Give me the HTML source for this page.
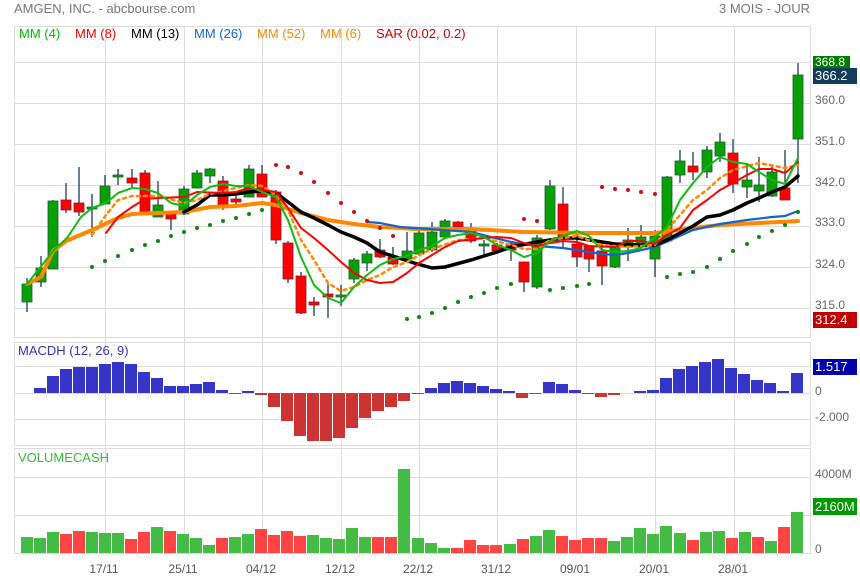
<!DOCTYPE html>
<html><head><meta charset="utf-8"><style>
html,body{margin:0;padding:0;background:#fff;}
svg{display:block;font-family:"Liberation Sans",sans-serif;}
</style></head><body>
<svg width="860" height="580" viewBox="0 0 860 580" xmlns="http://www.w3.org/2000/svg">
<rect width="860" height="580" fill="#fff"/>
<text x="14" y="13" font-size="13" fill="#777">AMGEN, INC. - abcbourse.com</text>
<text x="810" y="13" font-size="13" fill="#777" text-anchor="end">3 MOIS - JOUR</text>
<g stroke="#dcdcdc" stroke-width="1" fill="none">
<rect x="14.5" y="26.5" width="796" height="311"/>
<rect x="14.5" y="342.5" width="796" height="103"/>
<rect x="14.5" y="448.5" width="796" height="105"/>
<path d="M14 62.5H810M14 103.5H810M14 144.5H810M14 185.5H810M14 226.5H810M14 267.5H810M14 308.5H810"/>
<path d="M14 366.5H810M14 393.5H810M14 419.5H810M14 477.5H810M14 515.5H810"/>
<path d="M105.5 26V553M184.5 26V553M262.5 26V553M341.5 26V553M419.5 26V553M497.5 26V553M576.5 26V553M655.5 26V553M734.5 26V553"/>
</g>
<g font-size="13">
<text x="19" y="38" fill="#00bb00">MM (4)</text>
<text x="75" y="38" fill="#ff0000">MM (8)</text>
<text x="131" y="38" fill="#000">MM (13)</text>
<text x="194" y="38" fill="#1166cc">MM (26)</text>
<text x="257" y="38" fill="#ff8800">MM (52)</text>
<text x="320" y="38" fill="#ff8800">MM (6)</text>
<text x="376" y="38" fill="#cc0000">SAR (0.02, 0.2)</text>
</g>
<g font-size="12" fill="#666">
<text x="815" y="104">360.0</text><text x="815" y="145">351.0</text><text x="815" y="186">342.0</text>
<text x="815" y="226">333.0</text><text x="815" y="268">324.0</text><text x="815" y="309">315.0</text>
<text x="815" y="395">0</text><text x="815" y="421">-2.000</text>
<text x="815" y="478">4000M</text><text x="815" y="553">0</text>
</g>
<rect x="813" y="56" width="37" height="12" fill="#007a00"/><text x="815" y="66" font-size="12" fill="#fff">368.8</text>
<rect x="813" y="68" width="44" height="16" fill="#123c5a"/><text x="815" y="80" font-size="13" fill="#fff">366.2</text>
<rect x="813" y="312" width="44" height="16" fill="#c00000"/><text x="815" y="324" font-size="13" fill="#fff">312.4</text>
<rect x="813" y="359" width="44" height="16" fill="#0000aa"/><text x="815" y="371" font-size="13" fill="#fff">1.517</text>
<rect x="813" y="498" width="44" height="17" fill="#009900"/><text x="815" y="511" font-size="13" fill="#fff">2160M</text>
<g stroke="#1a3a5a" stroke-width="1.3">
<path d="M27 278V312M41 256V287M53 200V269M66 183V213M79 167V216M92 194V237M105 175V204M118 169V185M132 169V188M145 170V213M158 181V217M171 212V230M184 186V215M197 170V188M210 168V183M223 176V210M236 196V204M249 165V197M262 165V197M276 190V244M288 241V283M301 272V314M314 297V316M328 284V318M341 285V306M354 258V283M367 251V271M380 239V258M393 247V265M407 232V260M419 229V256M432 222V252M445 219V238M458 221V232M471 223V243M484 240V257M497 243V252M511 242V261M524 262V292M537 235V289M550 180V230M563 187V247M577 232V267M589 245V272M602 247V285M615 245V268M628 228V261M641 225V248M655 230V277M667 176V242M680 150V183M693 152V180M707 146V178M720 133V162M733 139V193M747 163V198M759 157V202M772 166V197M785 150V200M798 63V183"/>
</g>
<g stroke="#1e5a2e" stroke-width="0.8" fill="#07a007">
<rect x="22" y="284" width="10" height="18"/><rect x="36" y="268" width="10" height="14"/><rect x="48" y="201" width="10" height="68"/>
<rect x="87" y="207" width="10" height="2"/><rect x="100" y="186" width="10" height="18"/><rect x="113" y="175" width="10" height="2"/>
<rect x="153" y="205" width="10" height="12"/><rect x="179" y="189" width="10" height="25"/><rect x="192" y="173" width="10" height="15"/>
<rect x="205" y="169" width="10" height="7"/><rect x="244" y="169" width="10" height="28"/><rect x="336" y="295" width="10" height="2"/>
<rect x="349" y="260" width="10" height="19"/><rect x="362" y="254" width="10" height="9"/><rect x="402" y="251" width="10" height="8"/>
<rect x="414" y="233" width="10" height="21"/><rect x="427" y="232" width="10" height="18"/><rect x="440" y="221" width="10" height="16"/>
<rect x="479" y="244" width="10" height="2"/><rect x="532" y="238" width="10" height="49"/><rect x="545" y="186" width="10" height="43"/>
<rect x="610" y="246" width="10" height="21"/><rect x="623" y="240" width="10" height="7"/><rect x="636" y="237" width="10" height="10"/>
<rect x="650" y="236" width="10" height="23"/><rect x="662" y="177" width="10" height="64"/><rect x="675" y="161" width="10" height="14"/>
<rect x="702" y="150" width="10" height="22"/><rect x="715" y="142" width="10" height="14"/><rect x="742" y="180" width="10" height="7"/>
<rect x="754" y="185" width="10" height="6"/><rect x="767" y="172" width="10" height="24"/><rect x="793" y="75" width="10" height="64"/>
</g>
<g stroke="#8a1a2a" stroke-width="0.8" fill="#ff0000">
<rect x="61" y="200" width="10" height="10"/><rect x="74" y="203" width="10" height="9"/><rect x="127" y="178" width="10" height="5"/>
<rect x="140" y="173" width="10" height="39"/><rect x="166" y="212" width="10" height="7"/><rect x="218" y="181" width="10" height="24"/>
<rect x="231" y="199" width="10" height="3"/><rect x="257" y="174" width="10" height="23"/><rect x="271" y="192" width="10" height="48"/>
<rect x="283" y="243" width="10" height="36"/><rect x="296" y="276" width="10" height="37"/><rect x="309" y="302" width="10" height="3"/>
<rect x="323" y="294" width="10" height="3"/><rect x="375" y="250" width="10" height="7"/><rect x="388" y="257" width="10" height="7"/>
<rect x="453" y="222" width="10" height="5"/><rect x="466" y="230" width="10" height="11"/><rect x="492" y="245" width="10" height="6"/>
<rect x="506" y="244" width="10" height="6"/><rect x="519" y="262" width="10" height="20"/><rect x="558" y="204" width="10" height="33"/>
<rect x="572" y="244" width="10" height="13"/><rect x="584" y="246" width="10" height="13"/><rect x="597" y="251" width="10" height="15"/>
<rect x="688" y="166" width="10" height="6"/><rect x="728" y="153" width="10" height="31"/><rect x="780" y="188" width="10" height="12"/>
</g>
<g fill="none" stroke-linejoin="round" stroke-linecap="round">
<polyline stroke="#ff8800" stroke-width="4" points="27,284 41,277 53,251 66,241 92,230 118,218 132,214 158,213 184,212 210,207 236,206 262,203 276,205 301,213 328,220 354,224 380,227 400,228 414,229 471,229 524,232 589,233 655,233 693,228 720,225 759,223 798,221"/>
<polyline stroke="#1166cc" stroke-width="2.2" points="367,222 380,223 400,227 471,232 511,242 537,246 563,248 602,254 615,255 628,253 655,247 693,230 720,224 747,220 772,217 785,216 798,211"/>
<polyline stroke="#000" stroke-width="3.5" points="184,212 197,205 210,195 223,195 236,194 249,192 262,191 276,193 288,202 301,212 314,218 328,225 341,232 354,237 367,243 380,252 393,256 414,263 432,268 445,267 471,260 497,252 511,247 537,242 563,238 577,238 602,242 615,244 641,245 655,245 667,240 693,226 707,217 720,215 733,210 747,203 759,198 772,192 785,187 798,176"/>
<polyline stroke="#ff8800" stroke-width="2.5" stroke-dasharray="3,4" points="92,235 106,215 118,200 132,196 158,196 184,203 197,200 210,194 236,188 249,185 262,186 276,195 288,210 301,240 314,260 328,283 341,291 354,287 367,280 380,275 393,267 407,262 419,255 432,249 458,240 484,238 511,245 524,249 537,249 550,240 577,236 602,245 628,247 655,245 667,230 680,215 693,200 707,190 720,178 733,170 759,163 785,168 798,165"/>
<polyline stroke="#ff0000" stroke-width="2" points="106,233 118,217 132,207 145,199 158,198 184,197 197,192 223,193 236,192 249,188 262,190 276,192 288,208 301,228 314,238 328,250 341,262 354,273 367,280 380,283 393,282 407,273 419,263 432,255 445,247 458,241 484,238 497,237 511,238 524,243 537,246 550,243 563,241 577,242 589,246 615,247 628,241 641,241 655,244 667,235 680,228 693,210 707,200 720,190 733,183 747,175 759,169 772,169 785,173 798,162"/>
<polyline stroke="#11bb11" stroke-width="2" points="27,284 54,250 67,238 81,217 92,208 106,203 118,193 132,188 145,189 158,193 171,203 184,206 197,195 210,187 223,184 236,186 249,186 262,192 276,197 288,220 301,257 314,285 328,298 341,303 354,287 367,275 380,265 393,259 407,256 419,250 432,246 445,238 458,235 471,233 484,237 497,245 511,250 524,257 537,253 550,241 563,236 577,231 589,236 602,250 615,252 628,251 641,248 655,237 667,227 680,200 693,183 707,167 720,157 733,162 747,164 759,172 772,180 785,184 798,158"/>
</g>
<g fill="#0a8a0a">
<circle cx="92" cy="267" r="2"/><circle cx="105" cy="261" r="2"/><circle cx="118" cy="256" r="2"/><circle cx="132" cy="250" r="2"/><circle cx="145" cy="245" r="2"/><circle cx="158" cy="241" r="2"/><circle cx="171" cy="236" r="2"/><circle cx="184" cy="232" r="2"/><circle cx="197" cy="228" r="2"/><circle cx="210" cy="225" r="2"/><circle cx="223" cy="221" r="2"/><circle cx="236" cy="218" r="2"/><circle cx="249" cy="214" r="2"/><circle cx="262" cy="210" r="2"/>
<circle cx="407" cy="319" r="2"/><circle cx="419" cy="317" r="2"/><circle cx="432" cy="313" r="2"/><circle cx="445" cy="308" r="2"/><circle cx="458" cy="302" r="2"/><circle cx="471" cy="297" r="2"/><circle cx="484" cy="293" r="2"/><circle cx="497" cy="288" r="2"/><circle cx="511" cy="284" r="2"/>
<circle cx="550" cy="290" r="2"/><circle cx="563" cy="288" r="2"/><circle cx="577" cy="286" r="2"/><circle cx="589" cy="284" r="2"/>
<circle cx="667" cy="277" r="2"/><circle cx="680" cy="274" r="2"/><circle cx="693" cy="272" r="2"/><circle cx="707" cy="267" r="2"/><circle cx="720" cy="259" r="2"/><circle cx="733" cy="251" r="2"/><circle cx="747" cy="244" r="2"/><circle cx="759" cy="237" r="2"/><circle cx="772" cy="231" r="2"/><circle cx="785" cy="225" r="2"/><circle cx="798" cy="212" r="2"/>
</g>
<g fill="#cc1111">
<circle cx="276" cy="165" r="2"/><circle cx="288" cy="167" r="2"/><circle cx="301" cy="173" r="2"/><circle cx="314" cy="182" r="2"/><circle cx="328" cy="193" r="2"/><circle cx="341" cy="203" r="2"/><circle cx="354" cy="212" r="2"/><circle cx="367" cy="221" r="2"/><circle cx="380" cy="228" r="2"/><circle cx="393" cy="236" r="2"/>
<circle cx="524" cy="219" r="2"/><circle cx="537" cy="221" r="2"/>
<circle cx="602" cy="187" r="2"/><circle cx="615" cy="189" r="2"/><circle cx="628" cy="190" r="2"/><circle cx="641" cy="192" r="2"/><circle cx="655" cy="194" r="2"/>
</g>
<text x="18" y="355" font-size="13" fill="#3333bb">MACDH (12, 26, 9)</text>
<g fill="#3535c8">
<rect x="34" y="388" width="12" height="5"/><rect x="47" y="376" width="12" height="17"/><rect x="60" y="369" width="12" height="24"/><rect x="73" y="367" width="12" height="26"/><rect x="86" y="367" width="12" height="26"/><rect x="99" y="364" width="12" height="29"/><rect x="112" y="362" width="12" height="31"/><rect x="125" y="364" width="12" height="29"/><rect x="138" y="372" width="12" height="21"/><rect x="151" y="378" width="12" height="15"/><rect x="164" y="386" width="12" height="7"/><rect x="177" y="386" width="12" height="7"/><rect x="190" y="384" width="12" height="9"/><rect x="203" y="382" width="12" height="11"/><rect x="216" y="390" width="12" height="3"/><rect x="242" y="391" width="12" height="2"/>
<rect x="425" y="388" width="12" height="5"/><rect x="438" y="383" width="12" height="10"/><rect x="451" y="381" width="12" height="12"/><rect x="464" y="383" width="12" height="10"/><rect x="477" y="386" width="12" height="7"/><rect x="490" y="389" width="12" height="4"/><rect x="503" y="391" width="12" height="2"/>
<rect x="543" y="382" width="12" height="11"/><rect x="556" y="384" width="12" height="9"/><rect x="569" y="390" width="12" height="3"/>
<rect x="634" y="391" width="12" height="2"/><rect x="647" y="390" width="12" height="3"/><rect x="660" y="378" width="12" height="15"/><rect x="673" y="369" width="12" height="24"/><rect x="686" y="366" width="12" height="27"/><rect x="699" y="362" width="12" height="31"/><rect x="712" y="359" width="12" height="34"/><rect x="725" y="368" width="12" height="25"/><rect x="738" y="374" width="12" height="19"/><rect x="751" y="380" width="12" height="13"/><rect x="764" y="383" width="12" height="10"/><rect x="777" y="391" width="12" height="2"/><rect x="791" y="373" width="12" height="20"/>
</g>
<g fill="#cc3333">
<rect x="229" y="393" width="12" height="1"/><rect x="255" y="393" width="12" height="2"/><rect x="268" y="393" width="12" height="14"/><rect x="281" y="393" width="12" height="28"/><rect x="294" y="393" width="12" height="43"/><rect x="307" y="393" width="12" height="48"/><rect x="320" y="393" width="12" height="48"/><rect x="333" y="393" width="12" height="45"/><rect x="346" y="393" width="12" height="35"/><rect x="359" y="393" width="12" height="25"/><rect x="372" y="393" width="12" height="18"/><rect x="385" y="393" width="12" height="14"/><rect x="398" y="393" width="12" height="8"/><rect x="412" y="393" width="12" height="1"/>
<rect x="516" y="393" width="12" height="5"/><rect x="529" y="393" width="12" height="1"/><rect x="582" y="393" width="12" height="1"/><rect x="595" y="393" width="12" height="4"/><rect x="608" y="393" width="12" height="2"/>
</g>
<text x="18" y="462" font-size="13" fill="#33bb33">VOLUMECASH</text>
<g fill="#44bb44">
<rect x="21" y="537" width="12" height="16"/><rect x="34" y="538" width="12" height="15"/><rect x="47" y="532" width="12" height="21"/><rect x="86" y="532" width="12" height="21"/><rect x="99" y="533" width="12" height="20"/><rect x="112" y="533" width="12" height="20"/><rect x="151" y="527" width="12" height="26"/><rect x="177" y="534" width="12" height="19"/><rect x="190" y="538" width="12" height="15"/><rect x="203" y="545" width="12" height="8"/><rect x="229" y="537" width="12" height="16"/><rect x="242" y="534" width="12" height="19"/><rect x="307" y="535" width="12" height="18"/><rect x="320" y="538" width="12" height="15"/><rect x="333" y="539" width="12" height="14"/><rect x="346" y="528" width="12" height="25"/><rect x="359" y="537" width="12" height="16"/><rect x="398" y="469" width="12" height="84"/><rect x="412" y="538" width="12" height="15"/><rect x="425" y="543" width="12" height="10"/><rect x="438" y="548" width="12" height="5"/>
<rect x="504" y="544" width="12" height="9"/><rect x="530" y="536" width="12" height="17"/><rect x="543" y="530" width="12" height="23"/><rect x="608" y="541" width="12" height="12"/><rect x="621" y="537" width="12" height="16"/><rect x="634" y="528" width="12" height="25"/><rect x="647" y="534" width="12" height="19"/><rect x="660" y="526" width="12" height="27"/><rect x="674" y="533" width="12" height="20"/><rect x="700" y="532" width="12" height="21"/><rect x="713" y="531" width="12" height="22"/><rect x="739" y="532" width="12" height="21"/><rect x="765" y="541" width="12" height="12"/><rect x="791" y="512" width="12" height="41"/>
</g>
<g fill="#ff4444">
<rect x="60" y="534" width="12" height="19"/><rect x="73" y="531" width="12" height="22"/><rect x="125" y="539" width="12" height="14"/><rect x="138" y="532" width="12" height="21"/><rect x="164" y="531" width="12" height="22"/><rect x="216" y="538" width="12" height="15"/><rect x="255" y="529" width="12" height="24"/><rect x="268" y="535" width="12" height="18"/><rect x="281" y="531" width="12" height="22"/><rect x="294" y="536" width="12" height="17"/><rect x="372" y="537" width="12" height="16"/><rect x="385" y="537" width="12" height="16"/><rect x="451" y="548" width="12" height="5"/><rect x="464" y="540" width="12" height="13"/><rect x="477" y="545" width="12" height="8"/><rect x="490" y="545" width="12" height="8"/>
<rect x="517" y="539" width="12" height="14"/><rect x="556" y="536" width="12" height="17"/><rect x="569" y="540" width="12" height="13"/><rect x="582" y="538" width="12" height="15"/><rect x="595" y="538" width="12" height="15"/><rect x="687" y="540" width="12" height="13"/><rect x="726" y="538" width="12" height="15"/><rect x="752" y="537" width="12" height="16"/><rect x="778" y="527" width="12" height="26"/>
</g>
<g font-size="12" fill="#555" text-anchor="middle">
<text x="104" y="573">17/11</text><text x="183" y="573">25/11</text><text x="261" y="573">04/12</text><text x="340" y="573">12/12</text><text x="418" y="573">22/12</text><text x="496" y="573">31/12</text><text x="575" y="573">09/01</text><text x="654" y="573">20/01</text><text x="733" y="573">28/01</text>
</g>
</svg>
</body></html>
